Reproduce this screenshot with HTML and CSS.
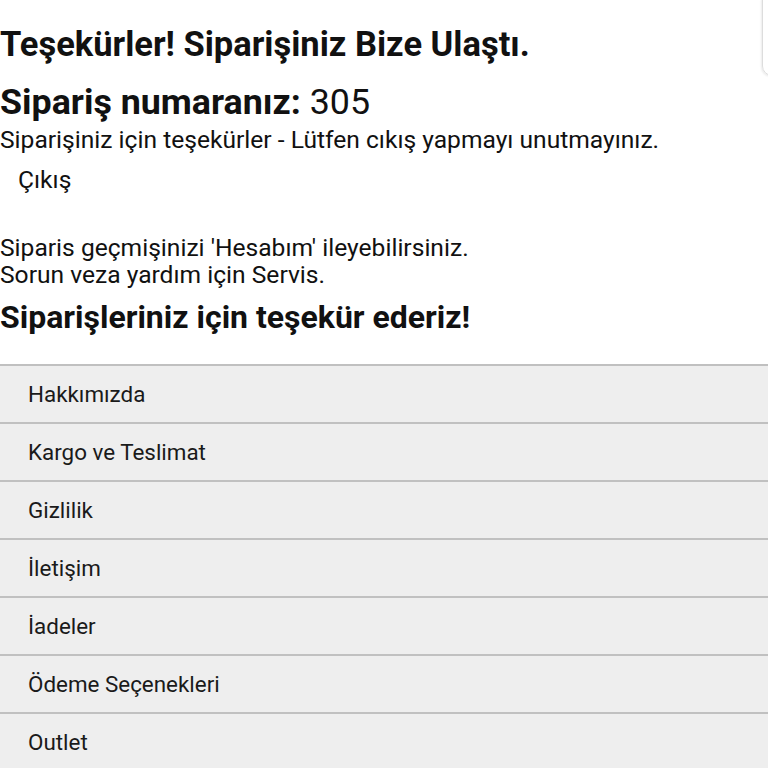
FILE: index.html
```html
<!DOCTYPE html>
<html lang="tr">
<head>
<meta charset="utf-8">
<link rel="stylesheet" href="styles.css">
</head>
<body>
<div class="edge-card"></div>
<main class="page">
  <h1 class="title">Teşekürler! Siparişiniz Bize Ulaştı.</h1>
  <h2 class="order"><b>Sipariş numaranız:</b> <span>305</span></h2>
  <p class="line">Siparişiniz için teşekürler - Lütfen cıkış yapmayı unutmayınız.</p>
  <a class="logout">Çıkış</a>
  <p class="line info">Siparis geçmişinizi 'Hesabım' ileyebilirsiniz.<br>Sorun veza yardım için Servis.</p>
  <h2 class="thanks">Siparişleriniz için teşekür ederiz!</h2>
  <nav class="menu">
    <a class="item">Hakkımızda</a>
    <a class="item">Kargo ve Teslimat</a>
    <a class="item">Gizlilik</a>
    <a class="item">İletişim</a>
    <a class="item">İadeler</a>
    <a class="item">Ödeme Seçenekleri</a>
    <a class="item">Outlet</a>
  </nav>
</main>
</body>
</html>
```
FILE: styles.css
```css
html, body {
  margin: 0;
  padding: 0;
  background: #fff;
}
body {
  font-family: Roboto, "Noto Sans", sans-serif;
  color: #111;
  overflow: hidden;
}
.edge-card {
  position: absolute;
  top: -10px;
  left: 762px;
  width: 40px;
  height: 84px;
  border: 1px solid #ddd;
  border-radius: 10px;
  box-shadow: -1px 1px 2px rgba(0,0,0,0.08);
}
.page {
  display: flex;
  flex-direction: column;
  align-items: flex-start;
}
.title {
  margin: 24px 0 0;
  font-size: 34.5px;
  font-weight: 700;
  line-height: 40px;
}
.order {
  margin: 18px 0 0;
  font-size: 35.8px;
  line-height: 40px;
  font-weight: 400;
}
.order b { font-weight: 700; }
.line {
  margin: 4px 0 0;
  font-size: 24.6px;
  line-height: 27px;
}
.logout {
  margin: 13px 0 0 18px;
  font-size: 24.6px;
  line-height: 27px;
}
.info {
  margin-top: 41px;
}
.thanks {
  margin: 11px 0 0;
  font-size: 32px;
  line-height: 36px;
  font-weight: 700;
}
.menu {
  align-self: stretch;
  margin-top: 29px;
  display: flex;
  flex-direction: column;
}
.item {
  display: block;
  height: 56px;
  line-height: 56px;
  padding-left: 28px;
  background: #eee;
  border-top: 2px solid #c0c0c0;
  font-size: 22.4px;
  color: #1a1a1a;
}
```
